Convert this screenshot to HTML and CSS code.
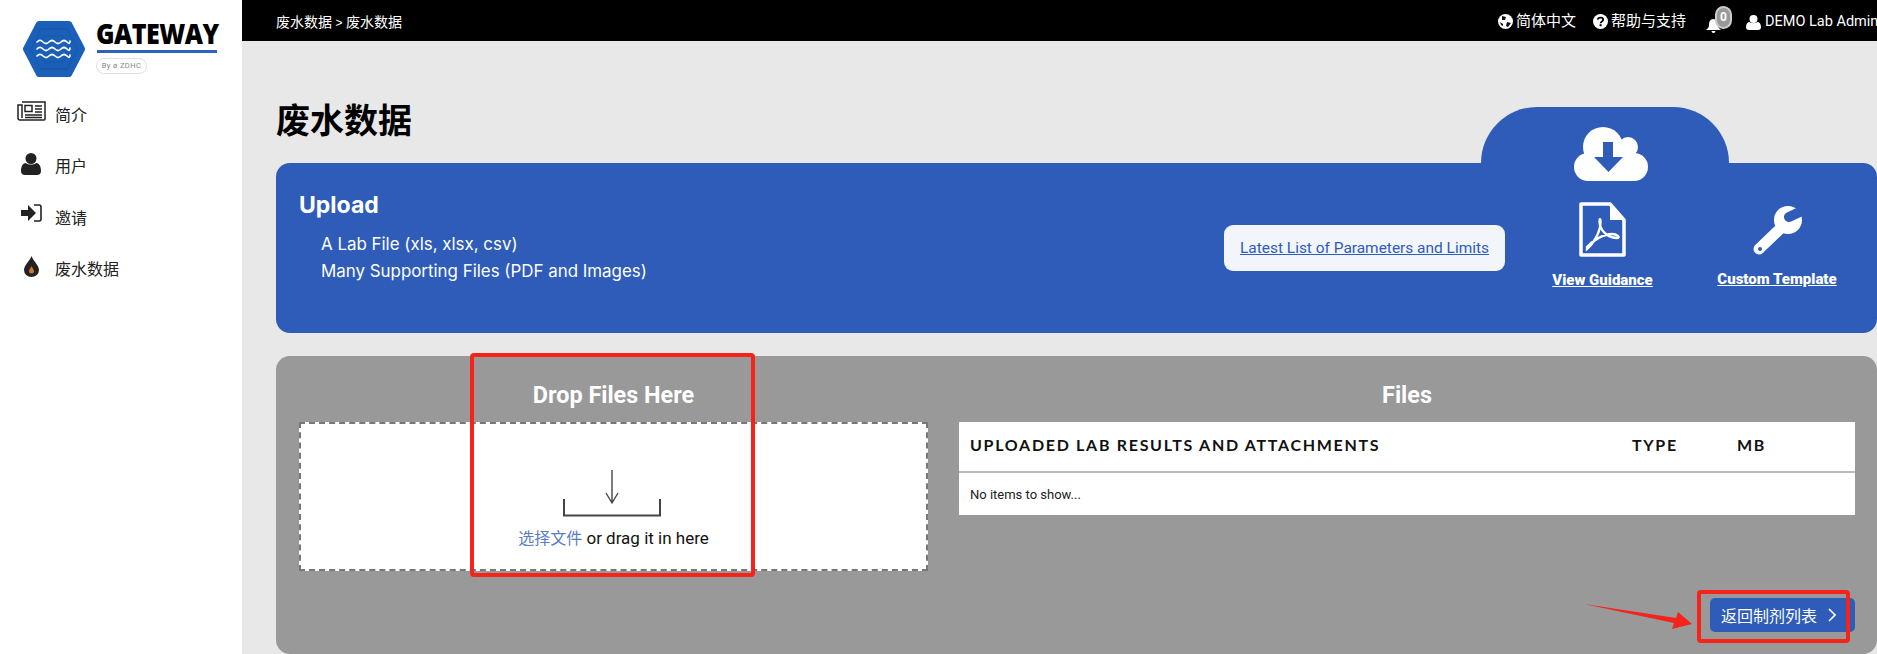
FILE: index.html
```html
<!DOCTYPE html>
<html lang="zh-CN">
<head>
    <meta charset="UTF-8" />
    <title>废水数据</title>
    <link rel="stylesheet" href="styles.css">
</head>
<body>
    <aside class="sidebar">
        <div class="logo">
            <svg class="logo-hex" viewBox="0 0 62 56" width="62" height="56">
                <polygon points="16,3 46,3 59,28 46,53 16,53 3,28" fill="#1a5fb8" stroke="#1a5fb8" stroke-width="6" stroke-linejoin="round"/>
                <polygon points="18,8 44,8 54,28 44,48 18,48 8,28" fill="none" stroke="#1857aa" stroke-width="1"/>
                <polygon points="22,15 40,15 47,28 40,41 22,41 15,28" fill="none" stroke="#1857aa" stroke-width="1"/>
                <g fill="none" stroke="#fff" stroke-width="1.7" stroke-linecap="round">
                    <path d="M14 21 q3-3 6 0 t6 0 t6 0 t6 0 t6 0 t3-1"/>
                    <path d="M14 28 q3-3 6 0 t6 0 t6 0 t6 0 t6 0 t3-1"/>
                    <path d="M14 35 q3-3 6 0 t6 0 t6 0 t6 0 t6 0 t3-1"/>
                </g>
            </svg>
            <div class="logo-side">
                <div class="logo-name">GATEWAY</div>
                <div class="logo-line"></div>
                <div class="logo-pill">By ø ZDHC</div>
            </div>
        </div>
        <nav class="nav">
            <a class="nav-item">
                <span class="nav-icon">
                    <svg viewBox="0 0 29 20" width="29" height="20" fill="none" stroke="#222" stroke-width="1.5">
                        <path d="M5 1 H28 V18 Q28 19 27 19 H3 Q1 19 1 17 V4 H5 V17"/>
                        <rect x="8" y="4.5" width="7" height="6"/>
                        <path d="M18 5 H25 M18 8 H25 M18 11 H25 M8 14 H25 M8 16.5 H25"/>
                    </svg>
                </span>简介
            </a>
            <a class="nav-item">
                <span class="nav-icon">
                    <svg viewBox="0 0 20 22" width="20" height="22" fill="#222">
                        <circle cx="10" cy="5.5" r="5.5"/>
                        <path d="M0 18 C0 13 2 10 5 10 C7 12 13 12 15 10 C18 10 20 13 20 18 C20 21 18 22 16 22 H4 C2 22 0 21 0 18 Z"/>
                    </svg>
                </span>用户
            </a>
            <a class="nav-item">
                <span class="nav-icon">
                    <svg viewBox="0 0 21 18" width="21" height="18" fill="#222">
                        <path d="M0 6 H7 V1 L15 9 L7 17 V12 H0 Z"/>
                        <path d="M13 1 H18 Q20 1 20 3 V15 Q20 17 18 17 H13" fill="none" stroke="#222" stroke-width="1.6"/>
                    </svg>
                </span>邀请
            </a>
            <a class="nav-item">
                <span class="nav-icon">
                    <svg viewBox="0 0 15 21" width="15" height="21">
                        <path d="M7.5 0 C9 5 15 9 15 14 A7.5 7 0 0 1 0 14 C0 9 6 5 7.5 0 Z" fill="#222"/>
                        <path d="M7.5 10 C8 12 10 13 10 15 A2.5 2.5 0 0 1 5 15 C5 13 7 12 7.5 10 Z" fill="#c9792f"/>
                    </svg>
                </span>废水数据
            </a>
        </nav>
    </aside>

    <div class="page">
        <header class="topbar">
            <div class="crumbs">废水数据 <span class="crumb-sep">&gt;</span> 废水数据</div>
            <div class="top-links">
                <a class="top-link">
                    <svg viewBox="0 0 15 15" width="15" height="15">
                        <circle cx="7.5" cy="7.5" r="7.5" fill="#fff"/>
                        <path d="M4 2 L8 3 L7 6 L4 6 Z M9 8 L13 9 L10 13 L8 12 Z M2 8 L5 10 L5 12 L3 11 Z" fill="#111"/>
                    </svg>
                    简体中文
                </a>
                <a class="top-link">
                    <svg viewBox="0 0 15 15" width="15" height="15">
                        <circle cx="7.5" cy="7.5" r="7.5" fill="#fff"/>
                        <path d="M4.8 5.6 C5 3 10.2 3 10.2 5.8 C10.2 7.6 7.6 7.4 7.6 9.2" fill="none" stroke="#000" stroke-width="1.8"/>
                        <rect x="6.6" y="10.2" width="2" height="2" fill="#000"/>
                    </svg>
                    帮助与支持
                </a>
                <a class="top-bell">
                    <svg viewBox="0 0 15 15" width="15" height="15" fill="#fff">
                        <path d="M7.5 1 C11 1 12 4 12 7 C12 9 13 10.5 15 12 H0 C2 10.5 3 9 3 7 C3 4 4 1 7.5 1 Z"/>
                        <path d="M5.5 13 H9.5 A2 2 0 0 1 5.5 13 Z"/>
                    </svg>
                    <span class="badge">0</span>
                </a>
                <a class="top-link top-user">
                    <svg viewBox="0 0 15 15" width="15" height="15" fill="#fff">
                        <circle cx="7.5" cy="4" r="4"/>
                        <path d="M0 12 C0 9 1.5 7 3.5 7 C5 8.5 10 8.5 11.5 7 C13.5 7 15 9 15 12 C15 14 14 15 12 15 H3 C1 15 0 14 0 12 Z"/>
                    </svg>
                    DEMO Lab Admin
                </a>
            </div>
        </header>

        <main class="content">
            <h1 class="title">废水数据</h1>

            <section class="upload-panel">
                <div class="cloud-tab">
                    <svg viewBox="0 0 74 54" width="74" height="54">
                        <g fill="#fff">
                            <circle cx="29" cy="20" r="20"/>
                            <circle cx="54" cy="20" r="10"/>
                            <circle cx="14" cy="40" r="14"/>
                            <circle cx="60" cy="40" r="14"/>
                            <rect x="14" y="24" width="46" height="30"/>
                        </g>
                        <path d="M29 15 H39 V30 H49 L34.5 45 L20 30 H29 Z" fill="#2e5cb8"/>
                    </svg>
                </div>
                <div class="upload-text">
                    <h2>Upload</h2>
                    <p>A Lab File (xls, xlsx, csv)</p>
                    <p>Many Supporting Files (PDF and Images)</p>
                </div>
                <a class="param-link">Latest List of Parameters and Limits</a>
                <div class="upload-actions">
                    <a class="action action-guide">
                        <svg viewBox="0 0 47 55" width="47" height="55">
                            <path d="M2 2 H31 L45 18 V53 H2 Z" fill="none" stroke="#fff" stroke-width="3.5" stroke-linejoin="round"/>
                            <path d="M31 2 L45 18 H31 Z" fill="#fff"/>
                            <path d="M8 47 C14 42 22 30 21.5 19 C21 15 20 18 21 23 C23 31 31 36 38 36 C42 35.500 38 32 33 32 C25 32 14 38 8 45 Z" fill="none" stroke="#fff" stroke-width="2.4"/>
                        </svg>
                        <span>View Guidance</span>
                    </a>
                    <a class="action action-template">
                        <svg viewBox="0 0 51 50" width="51" height="50">
                            <path d="M7 43 L30 21" stroke="#fff" stroke-width="11" stroke-linecap="round"/>
                            <circle cx="36" cy="14" r="14" fill="#fff"/>
                            <path d="M37 11 L54 3" stroke="#2e5cb8" stroke-width="10" stroke-linecap="round"/>
                            <circle cx="8" cy="43" r="2" fill="#2e5cb8"/>
                        </svg>
                        <span>Custom Template</span>
                    </a>
                </div>
            </section>

            <section class="files-panel">
                <div class="files-grid">
                    <div class="drop-col">
                        <h3>Drop Files Here</h3>
                        <div class="dropzone">
                            <svg viewBox="0 0 98 48" width="98" height="48" fill="none" stroke="#444">
                                <path d="M49 1 V34 M43 24 L49 34 L55 24" stroke-width="1.4"/>
                                <path d="M1 30 V46.500 H97 V30" stroke-width="2"/>
                            </svg>
                            <p><a class="choose">选择文件</a> or drag it in here</p>
                        </div>
                    </div>
                    <div class="list-col">
                        <h3>Files</h3>
                        <div class="file-table">
                            <div class="file-head">
                                <span class="col-name">UPLOADED LAB RESULTS AND ATTACHMENTS</span>
                                <span class="col-type">TYPE</span>
                                <span class="col-mb">MB</span>
                            </div>
                            <div class="file-empty">No items to show...</div>
                        </div>
                    </div>
                </div>
                <div class="files-foot">
                    <a class="back-btn">返回制剂列表
                        <svg viewBox="0 0 8 14" width="8" height="14" fill="none" stroke="#fff" stroke-width="1.6"><path d="M1 1 L7 7 L1 13"/></svg>
                    </a>
                </div>
            </section>
        </main>
    </div>

    <!-- red marks drawn on top of the screenshot -->
    <div class="mark mark-drop"></div>
    <div class="mark mark-btn"></div>
    <svg class="mark-arrow" viewBox="0 0 108 26" width="108" height="26">
        <polygon points="0,0 92,14 94,8 108,20 88,25 90,19" fill="#f5231a"/>
    </svg>
</body>
</html>
```

FILE: styles.css
```css
* {
    box-sizing: border-box;
}

html, body {
    height: 654px;
    overflow: hidden;
}

body {
    margin: 0;
    display: flex;
    position: relative;
    background: #e8e8e8;
    font-family: Roboto, "Noto Sans CJK SC", sans-serif;
    color: #222;
}

a {
    cursor: pointer;
}

/* sidebar */
.sidebar {
    width: 242px;
    flex: none;
    background: #fff;
}

.logo {
    display: flex;
    padding: 21px 0 0 23px;
    height: 88px;
}

.logo-side {
    margin-left: 11px;
    width: 125px;
}

.logo-name {
    font-family: "Open Sans", sans-serif;
    font-weight: 800;
    font-size: 29px;
    line-height: 23px;
    color: #000;
    letter-spacing: -0.6px;
    white-space: nowrap;
    transform: scaleX(0.865);
    transform-origin: left center;
}

.logo-line {
    width: 120px;
    height: 3px;
    margin: 6px 0 5px 1px;
    background: #2b63be;
}

.logo-pill {
    width: 51px;
    height: 16px;
    border: 1px solid #e2e2e2;
    border-radius: 8px;
    font-size: 7.5px;
    letter-spacing: 0.4px;
    line-height: 14px;
    text-align: center;
    color: #888;
}

.nav-item {
    position: relative;
    display: flex;
    align-items: center;
    height: 51.5px;
    padding-left: 55px;
    font-size: 16px;
    color: #222;
}

.nav-icon {
    position: absolute;
    left: 16px;
    top: 0;
    width: 30px;
    display: flex;
    justify-content: center;
}

.nav-icon svg {
    margin-top: 13px;
}

/* top bar */
.page {
    flex: 1;
    min-width: 0;
}

.topbar {
    height: 41px;
    background: #000;
    color: #fff;
    display: flex;
    justify-content: space-between;
    align-items: center;
    padding-left: 34px;
    white-space: nowrap;
    overflow: hidden;
}

.crumbs {
    font-size: 14px;
}

.crumb-sep {
    font-family: "Liberation Sans", sans-serif;
    font-size: 12px;
}

.top-links {
    display: flex;
    align-items: center;
    width: 379px;
    flex: none;
    margin-top: -3px;
}

.top-link {
    display: flex;
    align-items: center;
    gap: 3px;
    font-size: 15px;
    margin-right: 17px;
}

.top-link svg {
    margin-top: 5px;
}

.top-bell {
    position: relative;
    display: block;
    width: 15px;
    height: 15px;
    margin: 12px 25px 0 3px;
}

.top-bell svg {
    display: block;
}

.badge {
    position: absolute;
    left: 9px;
    top: -12px;
    width: 17px;
    height: 23px;
    border-radius: 9px;
    background: #999;
    border: 2px solid #ccc;
    font-size: 12px;
    font-weight: 700;
    line-height: 19px;
    text-align: center;
    color: #fff;
}

.top-user {
    font-size: 14.5px;
    margin: 5px 0 0;
    gap: 4px;
}

.top-user svg {
    margin-top: 2px;
}

/* content */
.content {
    padding: 0 0 0 34px;
}

.title {
    margin: 0;
    height: 122px;
    padding-top: 57px;
    font-size: 34px;
    line-height: 46px;
    font-weight: 700;
    color: #000;
}

.upload-panel {
    position: relative;
    height: 170px;
    margin-right: 0;
    padding: 27px 0 0 23px;
    display: flex;
    background: #2e5cb8;
    border-radius: 14px;
    color: #fff;
}

.cloud-tab {
    position: absolute;
    left: 1205px;
    top: -56px;
    width: 248px;
    height: 56px;
    padding: 20px 0 0 93px;
    background: #2e5cb8;
    border-radius: 62px 62px 0 0;
}

.cloud-tab svg {
    display: block;
}

.upload-text {
    width: 925px;
    font-family: Inter, sans-serif;
}

.upload-text h2 {
    margin: 0 0 11px;
    font-size: 23px;
    line-height: 30px;
    font-weight: 700;
}

.upload-text p {
    margin: 0 0 0 22px;
    font-size: 16.9px;
    line-height: 27px;
}

.param-link {
    flex: none;
    align-self: flex-start;
    margin-top: 35px;
    width: 281px;
    height: 46px;
    background: #f2f5fa;
    border-radius: 9px;
    font-size: 15.45px;
    line-height: 46px;
    text-align: center;
    color: #2e5cb8;
    text-decoration: underline;
}

.action {
    position: absolute;
    display: flex;
    flex-direction: column;
    align-items: center;
    font-size: 15px;
    font-weight: 900;
    white-space: nowrap;
}

.action span {
    text-decoration: underline;
}

.action-guide {
    left: 1275px;
    top: 39px;
    width: 103px;
    gap: 14px;
}

.action-template {
    left: 1442px;
    top: 43px;
    width: 118px;
    gap: 14px;
}

.files-panel {
    margin-top: 23px;
    height: 298px;
    padding: 0 22px 0 23px;
    background: #999;
    border-radius: 14px;
}

.files-grid {
    display: grid;
    grid-template-columns: 629px 1fr;
    gap: 31px;
}

.files-grid h3 {
    margin: 0;
    height: 66px;
    padding-top: 25px;
    font-size: 23.4px;
    line-height: 28px;
    font-weight: 700;
    text-align: center;
    color: #fff;
}

.dropzone {
    height: 149px;
    padding-top: 45px;
    background: #fff;
    border: 2px dashed #777;
    text-align: center;
}

.dropzone svg {
    display: block;
    margin: 0 auto;
    transform: translateX(-2px);
}

.dropzone p {
    margin: 10px 0 0;
    font-size: 17px;
    line-height: 22px;
    color: #111;
}

.choose {
    font-size: 16px;
    color: #5b7cc4;
}

.file-table {
    background: #fff;
}

.file-head {
    height: 51px;
    display: flex;
    align-items: center;
    padding: 0 0 4px 11px;
    border-bottom: 2px solid #bbb;
    font-family: Lato, sans-serif;
    font-size: 16px;
    font-weight: 700;
    letter-spacing: 1.7px;
    color: #111;
}

.col-name {
    width: 662px;
}

.col-type {
    width: 105px;
}

.file-empty {
    height: 42px;
    padding-left: 11px;
    font-size: 13px;
    line-height: 43px;
    color: #222;
}

.files-foot {
    display: flex;
    justify-content: flex-end;
    margin-top: 27px;
}

.back-btn {
    display: flex;
    align-items: center;
    gap: 11px;
    height: 34px;
    padding-left: 11px;
    width: 145px;
    background: #2e5cb8;
    border-radius: 5px;
    font-size: 16px;
    color: #fff;
}

/* annotations over the page */
.mark {
    position: absolute;
    border: 4px solid #f5231a;
    border-radius: 4px;
}

.mark-drop {
    left: 470px;
    top: 353px;
    width: 285px;
    height: 224px;
}

.mark-btn {
    left: 1697px;
    top: 590px;
    width: 153px;
    height: 53px;
}

.mark-arrow {
    position: absolute;
    left: 1584px;
    top: 604px;
}
```
